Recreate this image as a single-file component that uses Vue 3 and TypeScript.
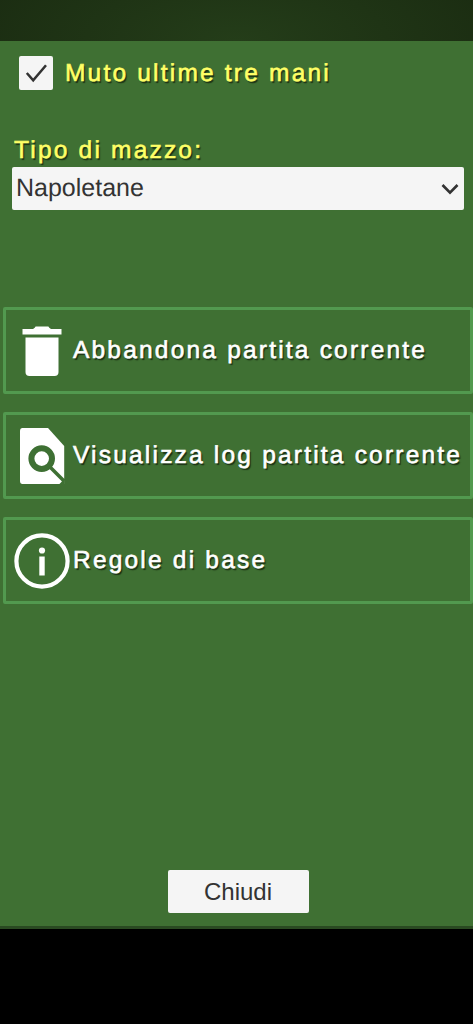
<script setup lang="ts">
const rows: { id: string; label: string }[] = [
  { id: 'trash', label: 'Abbandona partita corrente' },
  { id: 'log', label: 'Visualizza log partita corrente' },
  { id: 'info', label: 'Regole di base' },
]
</script>

<template>
  <div class="page">
    <header class="top"></header>
    <main class="panel">
      <div class="check-row">
        <span class="box">
          <svg width="24" height="24" viewBox="0 0 24 24"><path d="M2.8 12 L9.2 19.4 L22 4.2" fill="none" stroke="#333" stroke-width="2.5"/></svg>
        </span>
        <span class="yellow check-label">Muto ultime tre mani</span>
      </div>
      <div class="yellow deck-label">Tipo di mazzo:</div>
      <div class="select">
        <span>Napoletane</span>
        <svg width="18" height="12" viewBox="0 0 18 12"><path d="M1.5 2 L9 9.6 L16.5 2" fill="none" stroke="#333" stroke-width="2.7"/></svg>
      </div>
      <div class="rows">
        <div v-for="r in rows" :key="r.id" class="row">
          <span class="icon">
            <svg v-if="r.id === 'trash'" width="40" height="50" viewBox="0 0 40 50">
              <path d="M13 1.5 Q13 0.5 14 0.5 H26 Q27 0.5 27 1.5 L29 3 H39.5 V8.5 H0.5 V3 H11 Z" fill="#fff"/>
              <path d="M3.5 11.5 H36.5 V46 Q36.5 50 32.5 50 H7.5 Q3.5 50 3.5 46 Z" fill="#fff"/>
            </svg>
            <svg v-else-if="r.id === 'log'" width="46" height="56" viewBox="0 0 46 56">
              <path fill="#fff" d="M3.5 0 H29 L45.2 18 V56 H3.5 Q1 56 1 53 V3 Q1 0 3.5 0 Z"/>
              <circle cx="22.7" cy="30.6" r="10.3" fill="none" stroke="#3e7033" stroke-width="6"/>
              <path d="M30 38 L45 53" stroke="#3e7033" stroke-width="3.5" fill="none"/>
              <path d="M40 56.5 L45.7 50.5 V56.5 Z" fill="#3e7033"/>
            </svg>
            <svg v-else width="56" height="56" viewBox="0 0 56 56">
              <circle cx="28" cy="28" r="25.6" fill="none" stroke="#fff" stroke-width="4.2"/>
              <circle cx="28" cy="17.5" r="3.1" fill="#fff"/>
              <rect x="25.3" y="23.5" width="5.4" height="19" fill="#fff"/>
            </svg>
          </span>
          <span class="row-label">{{ r.label }}</span>
        </div>
      </div>
      <div class="footer">
        <button class="close" type="button">Chiudi</button>
      </div>
    </main>
  </div>
</template>

<style>
html, body { margin: 0; background: #000; }
</style>

<style scoped>
.page {
  width: 473px;
  height: 1024px;
  display: flex;
  flex-direction: column;
  background: #000;
  font-family: "Liberation Sans", Arial, sans-serif;
  text-rendering: geometricPrecision;
  overflow: hidden;
}
.top {
  height: 41px;
  background: radial-gradient(ellipse 300px 120px at 50% 100%, #243d19 0%, #1a2b11 100%);
}
.panel {
  height: 888px;
  box-sizing: border-box;
  background: #3f7033;
  border-bottom: 3px solid #2a4a22;
  display: flex;
  flex-direction: column;
}
.check-row {
  display: flex;
  align-items: center;
  gap: 12px;
  padding: 15px 0 0 19px;
}
.box {
  width: 34px;
  height: 34px;
  background: #f5f5f5;
  border-radius: 2px;
  display: flex;
  align-items: center;
  justify-content: center;
}
.yellow {
  color: #ffff66;
  font-size: 24.5px;
  letter-spacing: 2.2px;
  text-shadow: 1.5px 1.5px 1px #1c3014;
  -webkit-text-stroke: 0.6px #ffff66;
}
.check-label {
  padding-top: 2px;
}
.deck-label {
  margin: 46px 0 0 14px;
  line-height: 29px;
}
.select {
  margin: 2px 9px 0 12px;
  height: 43px;
  background: #f5f5f5;
  border-radius: 2px;
  display: flex;
  align-items: center;
  justify-content: space-between;
  padding: 0 5px 0 4px;
  color: #333;
  font-size: 25px;
}
.rows {
  margin: 97px 0 0 3px;
  display: flex;
  flex-direction: column;
  gap: 18px;
}
.row {
  height: 87px;
  box-sizing: border-box;
  border: 3px solid #52994f;
  border-radius: 2px;
  display: flex;
  align-items: center;
  position: relative;
  padding-left: 67px;
}
.icon {
  position: absolute;
  left: 8px;
  top: 0;
  bottom: 0;
  width: 56px;
  display: flex;
  align-items: center;
  justify-content: center;
}
.row-label {
  color: #fff;
  font-size: 24.5px;
  letter-spacing: 2.2px;
  white-space: nowrap;
  padding-top: 1px;
  text-shadow: 1.5px 1.5px 1px #1c3014;
  -webkit-text-stroke: 0.6px #fff;
}
.footer {
  margin-top: auto;
  display: flex;
  justify-content: center;
  padding: 0 0 13px 3px;
}
.close {
  width: 141px;
  height: 43px;
  background: #f5f5f5;
  border: none;
  border-radius: 2px;
  color: #333;
  font-family: inherit;
  font-size: 24px;
  padding: 0;
}
</style>
